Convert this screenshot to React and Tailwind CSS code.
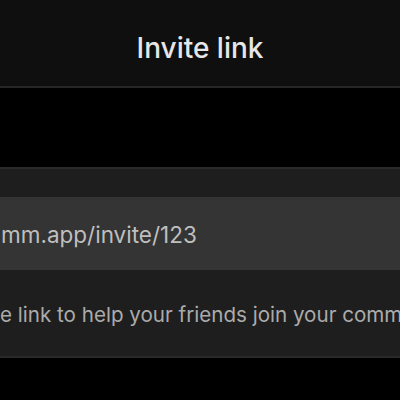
import React from 'react';

const App = () => {
    return (
        <div className="w-[400px] h-[400px] overflow-hidden bg-black" style={{ fontFamily: 'Inter, "Noto Sans", sans-serif' }}>
            <header className="h-[88px] bg-[#0f0f0f] border-b-2 border-[#262626] flex items-center justify-center">
                <h1 className="text-[28px] font-medium text-[#e6e6e6] pt-[10px]">Invite link</h1>
            </header>
            <div className="h-[79px]" />
            <section className="bg-[#1e1e1e] border-t-2 border-b-2 border-[#2a2a2a]">
                <div className="pt-[28px]">
                    <div className="h-[73px] bg-[#343434] flex items-center whitespace-nowrap">
                        <span className="text-[22.5px] text-[#bfbfbf] pl-[1px] pt-[3px]">mm.app/invite/123</span>
                    </div>
                </div>
                <div className="h-[86px] flex items-center whitespace-nowrap">
                    <p className="text-[20.6px] text-[#ababab] pt-[4px]">e link to help your friends join your comm</p>
                </div>
            </section>
        </div>
    );
};

export default App;
